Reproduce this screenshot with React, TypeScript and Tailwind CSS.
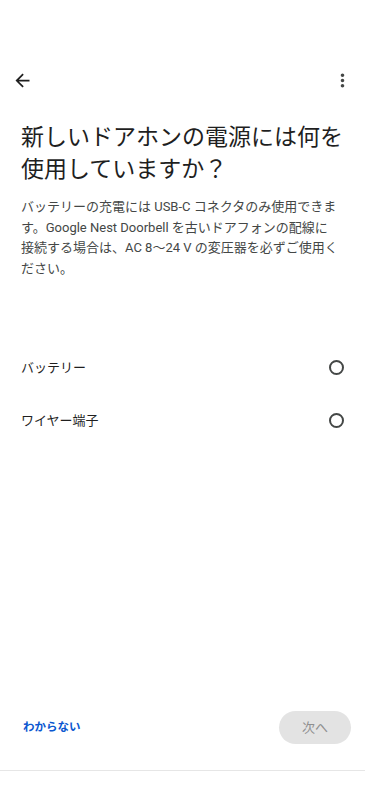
import React from "react";

const font = { fontFamily: '"Roboto", "Noto Sans CJK JP", sans-serif' };

function Radio() {
  return (
    <span className="block w-[15px] h-[15px] rounded-full border-[2px] border-[#444746]" />
  );
}

export default function App() {
  return (
    <div className="w-[365px] h-[800px] bg-white flex flex-col" style={font}>
      <div className="h-[52px]" />
      <div className="h-[56px] flex items-center justify-between pl-[12px] pr-[12px]">
        <svg width="21" height="21" viewBox="0 0 24 24" fill="#1f1f1f">
          <path d="M20 11H7.83l5.59-5.59L12 4l-8 8 8 8 1.41-1.41L7.83 13H20v-2z" />
        </svg>
        <svg width="21" height="21" viewBox="0 0 24 24" fill="#444746">
          <path d="M12 8c1.1 0 2-.9 2-2s-.9-2-2-2-2 .9-2 2 .9 2 2 2zm0 2c-1.1 0-2 .9-2 2s.9 2 2 2 2-.9 2-2-.9-2-2-2zm0 6c-1.1 0-2 .9-2 2s.9 2 2 2 2-.9 2-2-.9-2-2-2z" />
        </svg>
      </div>
      <div className="px-[21px]">
        <h1 className="mt-[14px] text-[23px] leading-[32px] text-[#1f1f1f] font-normal">
          新しいドアホンの電源には何を使用していますか？
        </h1>
        <p className="mt-[11px] text-[13px] leading-[20.5px] text-[#444746] whitespace-nowrap">
          バッテリーの充電には USB-C コネクタのみ使用できま
          <br />
          す。Google Nest Doorbell を古いドアフォンの配線に
          <br />
          接続する場合は、AC 8〜24 V の変圧器を必ずご使用く
          <br />
          ださい。
        </p>
      </div>
      <div className="mt-[62px] px-[21px] flex flex-col">
        <div className="h-[53px] flex items-center justify-between">
          <span className="text-[13px] text-[#1f1f1f]">バッテリー</span>
          <Radio />
        </div>
        <div className="h-[53px] flex items-center justify-between">
          <span className="text-[13px] text-[#1f1f1f]">ワイヤー端子</span>
          <Radio />
        </div>
      </div>
      <div className="flex-1" />
      <div className="flex items-center justify-between pl-[23px] pr-[14px]">
        <span className="text-[11.5px] font-bold text-[#0b57d0]">わからない</span>
        <button className="w-[72px] h-[33px] rounded-full bg-[#e3e3e3] text-[13px] text-[#8f8f8f]">
          次へ
        </button>
      </div>
      <div className="h-[26px]" />
      <div className="h-px bg-[#e6e6e6]" />
      <div className="h-[29px]" />
    </div>
  );
}
